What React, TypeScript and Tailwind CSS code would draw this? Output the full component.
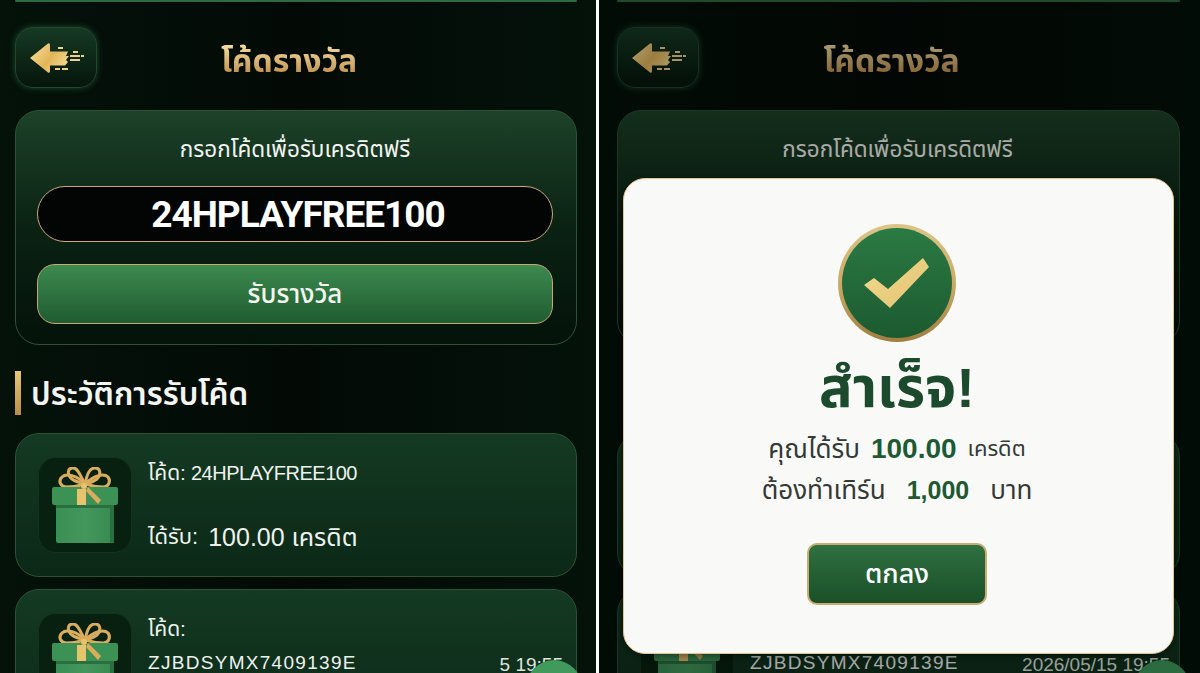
const FONT = "font-['Liberation_Sans','Noto_Sans_Thai','Noto_Sans',sans-serif]";

function BackArrow() {
  return (
    <svg width="56" height="32" viewBox="0 0 56 32" fill="none">
      <defs>
        <linearGradient id="arrowGold" x1="0" y1="0" x2="1" y2="0.6">
          <stop offset="0" stopColor="#fbe6a6" />
          <stop offset="0.6" stopColor="#e2b458" />
          <stop offset="1" stopColor="#f3d78e" />
        </linearGradient>
      </defs>
      <path d="M2 16 L20 1.500 Q22 0.500 22 3 L22 9.500 L40 9.500 L38 14 L41 14 L38 18 L40 20 L37 23.500 L22 23.500 L22 29 Q22 31.500 20 30.500 Z" fill="url(#arrowGold)" />
      <path d="M30 6h5M45 10h5M42 14h10M53 14h3M42 18h10M27 27h5M34 27h6" stroke="#ecd08c" strokeWidth="1.800" />
    </svg>
  );
}

function GiftIcon() {
  return (
    <svg width="66" height="76" viewBox="0 0 66 76" fill="none">
      <defs>
        <linearGradient id="giftBody" x1="0" y1="0" x2="1" y2="0">
          <stop offset="0" stopColor="#3a8f55" />
          <stop offset="0.5" stopColor="#43975c" />
          <stop offset="1" stopColor="#378a50" />
        </linearGradient>
      </defs>
      <path d="M33 17 C28 8 26 1 21 1 C15 1 15 8 20 12 C24 15 29 16 33 17" stroke="#d9ad5c" strokeWidth="3" />
      <path d="M33 17 C35 8 37 1 43 1 C49 1 49 8 45 12 C41 15 37 16 33 17" stroke="#d9ad5c" strokeWidth="3" />
      <path d="M33 17 C25 8 14 6 10 10 C6 14 8 19 14 20 C20 20 27 19 33 17" stroke="#d9ad5c" strokeWidth="3" />
      <path d="M33 17 C42 8 52 6 56 10 C59 14 57 19 52 20 C46 20 39 19 33 17" stroke="#d9ad5c" strokeWidth="3" />
      <rect x="4" y="38" width="58" height="38" rx="2" fill="url(#giftBody)" />
      <path d="M58 38 L62 38 L62 76 L58 75 Z" fill="#2a6f40" />
      <rect x="4" y="38" width="58" height="3" fill="#2a6f40" />
      <rect x="0" y="20" width="66" height="18" rx="2" fill="#3c9155" />
      <rect x="25" y="22" width="9" height="16" fill="#e7c36d" />
      <path d="M36 20 L49 33 L46 37 L34 24 Z" fill="#d9ad5c" />
      <circle cx="32" cy="19" r="3" fill="#e7c36d" />
    </svg>
  );
}

function HistoryCard({ first }: { first?: boolean }) {
  return (
    <div className="relative flex h-[144px] gap-[16px] rounded-[24px] border border-[#2a5236] bg-gradient-to-b from-[#143a23] to-[#0b2816] pl-[22px] pr-[24px] pt-[23px]">
      <div className="flex h-[96px] w-[94px] shrink-0 items-center justify-center rounded-[18px] border border-[#12331e] bg-[#08200f]">
        <GiftIcon />
      </div>
      {first ? (
        <div className="flex flex-col text-[#eef2ee]">
          <div className="flex items-center gap-[5px] text-[20px] leading-[32px] tracking-[-0.5px]">
            <span className="text-[21px] tracking-normal">โค้ด:</span>
            <span>24HPLAYFREE100</span>
          </div>
          <div className="mt-[28px] flex items-center gap-[10px] leading-[40px]">
            <span className="text-[22px]">ได้รับ:</span>
            <span className="text-[25px]">100.00 เครดิต</span>
          </div>
        </div>
      ) : (
        <div className="flex flex-col text-[#eef2ee]">
          <span className="text-[21px] leading-[32px]">โค้ด:</span>
          <span className="mt-[2px] text-[19px] leading-[32px] tracking-[1.3px]">ZJBDSYMX7409139E</span>
        </div>
      )}
    </div>
  );
}

function Panel({ date, modal }: { date: string; modal?: boolean }) {
  return (
    <section className={`relative h-[673px] shrink-0 overflow-hidden bg-gradient-to-r from-[#04120a] via-[#030a06] to-[#04120a] ${modal ? "w-[601px] pl-[18px] pr-[20px]" : "w-[596px] pl-[15px] pr-[19px]"}`}>
      <div className="h-[2px] rounded-full bg-[#2f6a42]" />
      <header className="relative mt-[25px] flex h-[61px] items-center">
        <button className="flex h-[61px] w-[82px] items-center justify-center rounded-[18px] border border-[#21482f] bg-gradient-to-b from-[#163a24] to-[#06160c] shadow-[0_0_6px_#1c4a2e]">
          <BackArrow />
        </button>
        <h1 className="flex-1 pr-[96px] pt-[6px] text-center">
          <span className="bg-gradient-to-b from-[#f6e2a6] to-[#b9853f] bg-clip-text text-[32px] font-bold text-transparent">โค้ดรางวัล</span>
        </h1>
      </header>

      <div className="mt-[22px] flex h-[235px] flex-col rounded-[24px] border border-[#2a5236] bg-gradient-to-b from-[#1d4229] via-[#0a2213] to-[#04120a] pl-[21px] pr-[23px]">
        <p className="mt-[24px] text-center text-[22.500px] leading-[30px] text-[#f2f4f0]">กรอกโค้ดเพื่อรับเครดิตฟรี</p>
        <div className="mt-[21px] flex h-[56px] items-center justify-center rounded-full border border-[#cfa97a] bg-[#020503] pl-[6px] pt-[2px] font-['Roboto',sans-serif] text-[37px] font-bold tracking-[-1px] text-white">
          24HPLAYFREE100
        </div>
        <button className="mt-[22px] flex h-[60px] items-center justify-center rounded-[18px] border border-[#c5a873] bg-gradient-to-b from-[#3d8a50] to-[#1f5c30] text-[26px] font-medium text-[#f2f6ee]">
          รับรางวัล
        </button>
      </div>

      <div className="mt-[26px] flex h-[44px] items-center gap-[10px]">
        <div className={`h-[44px] w-[6px] bg-gradient-to-b from-[#e8c67a] to-[#b98d45] ${modal ? "invisible" : ""}`} />
        <h2 className="pt-[4px] text-[31.500px] font-semibold text-[#f4f6f2]">ประวัติการรับโค้ด</h2>
      </div>

      <div className="mt-[18px] flex flex-col gap-[12px]">
        <HistoryCard first />
        <HistoryCard />
      </div>

      <span className={`absolute top-[655px] text-[19px] leading-[20px] text-[#dfe4df] ${modal ? "right-[30px]" : "right-[33px]"}`}>{date}</span>
      <div className={`absolute top-[660px] h-[56px] w-[56px] rounded-full bg-[#3f9a5c] ${modal ? "right-[10px]" : "right-[14px]"}`} />

      {modal && (
        <>
          <div className="absolute inset-0 bg-black/30" />
          <div className="absolute left-[24px] top-[178px] flex h-[476px] w-[551px] flex-col items-center rounded-[22px] border border-[#e2c48f] bg-[#f9f9f8] pr-[3px] shadow-[0_2px_6px_rgba(0,0,0,0.4)]">
            <div className="mt-[45px] flex h-[118px] w-[118px] items-center justify-center rounded-full bg-gradient-to-b from-[#dcc587] via-[#c9ab67] to-[#a07f3e] p-[4px]">
              <div className="flex h-full w-full items-center justify-center rounded-full bg-gradient-to-b from-[#2b7a43] to-[#1c5a30]">
                <svg width="66" height="51" viewBox="0 0 66 51">
                  <defs>
                    <linearGradient id="tickGold" x1="0" y1="0" x2="1" y2="1">
                      <stop offset="0" stopColor="#f4dc8f" />
                      <stop offset="1" stopColor="#e0c070" />
                    </linearGradient>
                  </defs>
                  <path d="M0 27 L10 20 L24 31 L59 0 L65 9 L26 50 Z" fill="url(#tickGold)" />
                </svg>
              </div>
            </div>
            <h2 className="mt-[14px] text-[56px] font-bold leading-[64px] text-[#1b4a2d]">สำเร็จ!</h2>
            <p className="mt-[11px] flex items-center gap-[11px] text-[26px] leading-[36px] text-[#333a35]">
              <span>คุณได้รับ</span>
              <strong className="text-[28px] font-bold text-[#1d5a32]">100.00</strong>
              <span className="text-[22px]">เครดิต</span>
            </p>
            <p className="mt-[5px] flex items-center gap-[21px] text-[26px] leading-[36px] text-[#333a35]">
              <span>ต้องทำเทิร์น</span>
              <strong className="text-[25px] font-bold text-[#1d5a32]">1,000</strong>
              <span>บาท</span>
            </p>
            <button className="mt-[35px] flex h-[62px] w-[180px] items-center justify-center rounded-[10px] border-2 border-[#c8ad72] bg-gradient-to-b from-[#2f7040] to-[#1a5029] text-[27px] font-medium text-white">
              ตกลง
            </button>
          </div>
        </>
      )}
    </section>
  );
}

export default function App() {
  return (
    <div className={`flex h-[673px] w-[1200px] overflow-hidden bg-white ${FONT}`}>
      <Panel date="5 19:55" />
      <div className="w-[3px] shrink-0 bg-white" />
      <Panel date="2026/05/15 19:55" modal />
    </div>
  );
}
